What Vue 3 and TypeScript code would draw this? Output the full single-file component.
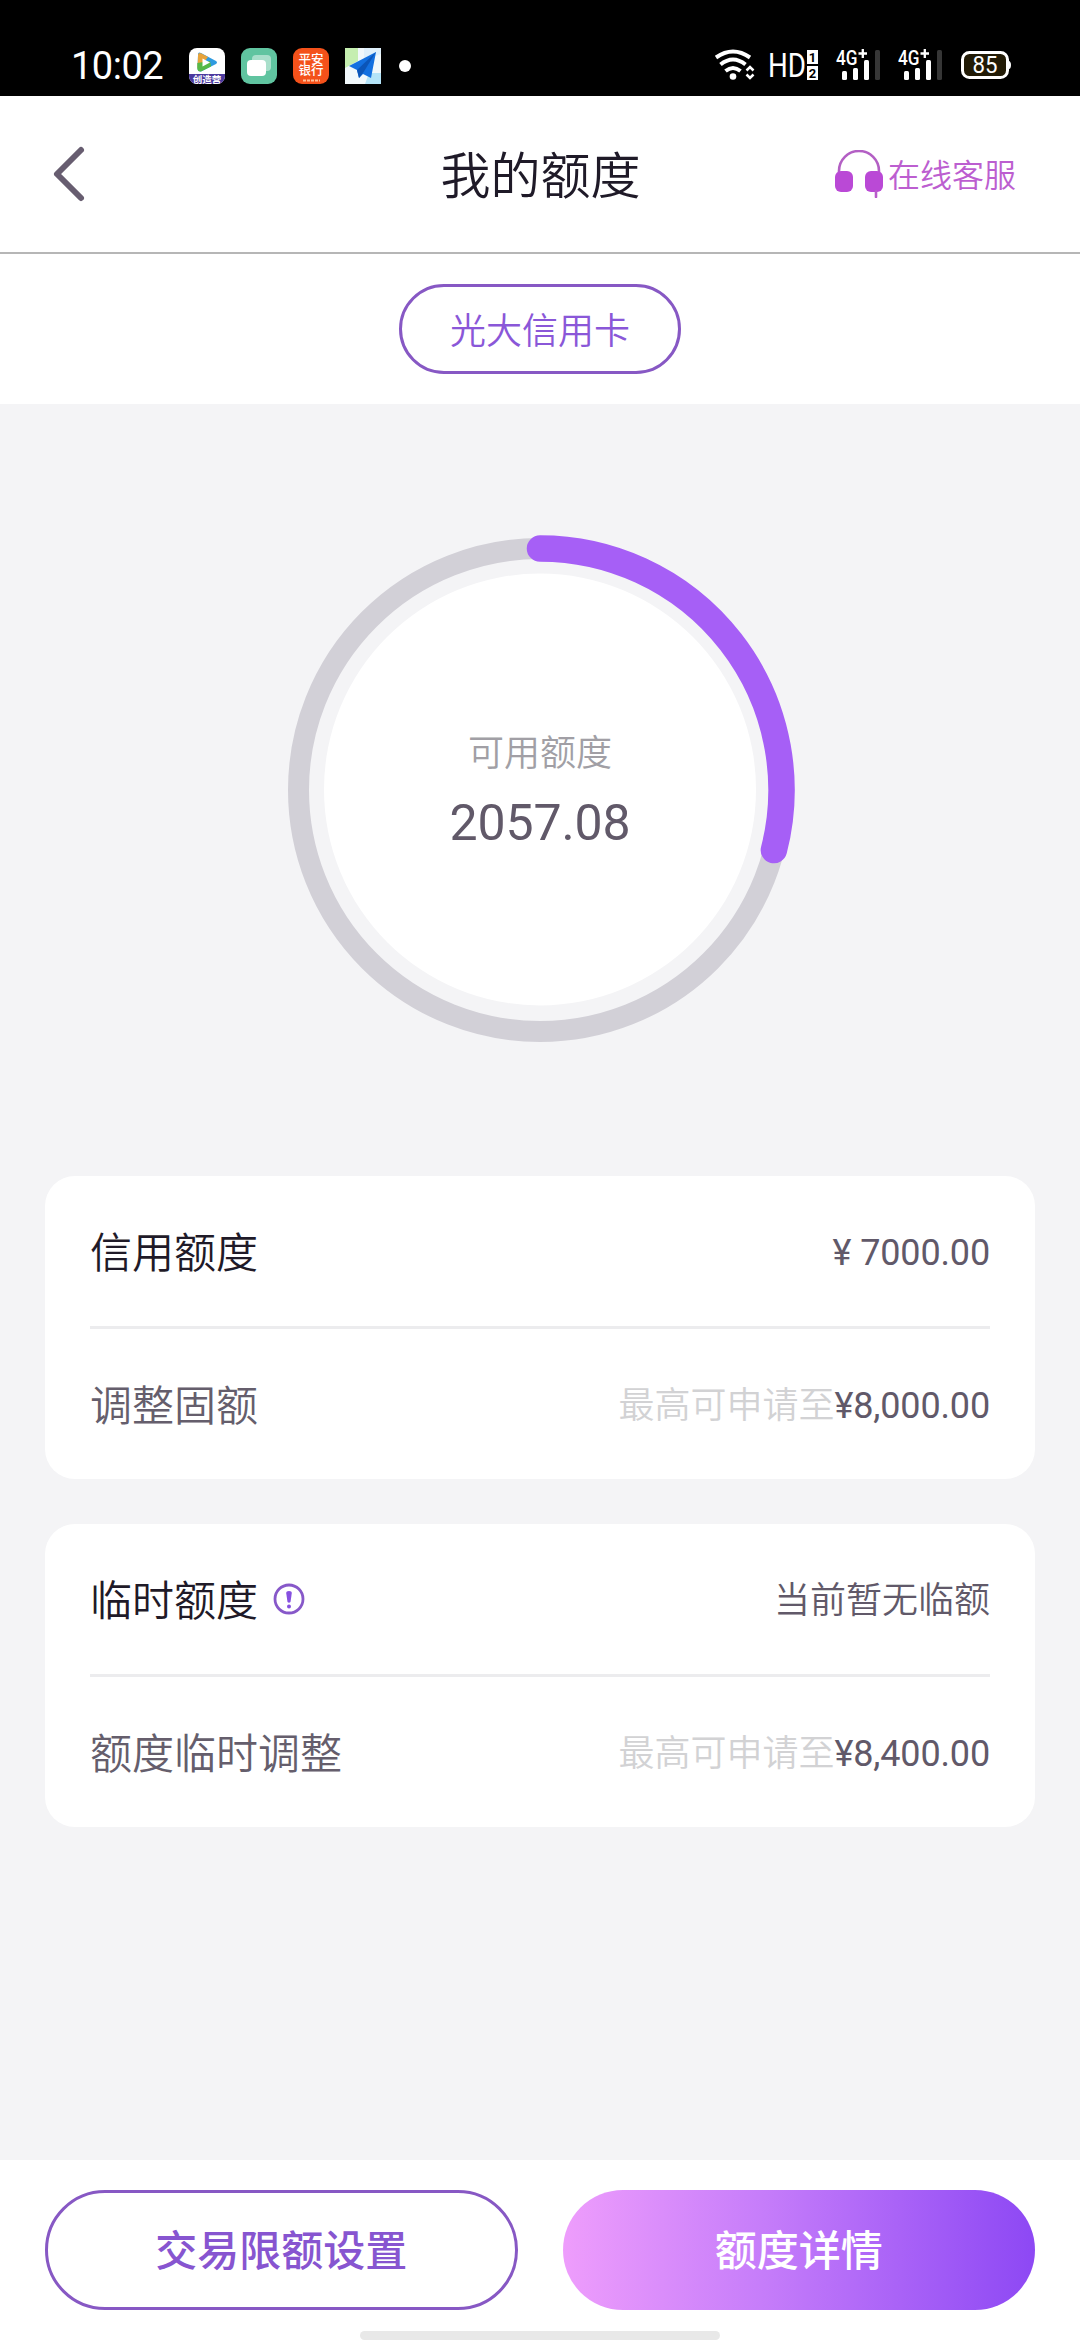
<script setup lang="ts">
interface Row {
  label: string
  strong?: boolean
  info?: boolean
  hint?: string
  amount?: boolean
  value: string
}

const cards: Row[][] = [
  [
    { label: '信用额度', strong: true, amount: true, value: '¥ 7000.00' },
    { label: '调整固额', hint: '最高可申请至', amount: true, value: '¥8,000.00' },
  ],
  [
    { label: '临时额度', strong: true, info: true, value: '当前暂无临额' },
    { label: '额度临时调整', hint: '最高可申请至', amount: true, value: '¥8,400.00' },
  ],
]

const radius = 241.5
const sweep = (104.4 * Math.PI) / 180
const endX = 260 + radius * Math.sin(sweep)
const endY = 260 - radius * Math.cos(sweep)
const arc = `M260 ${260 - radius}A${radius} ${radius} 0 0 1 ${endX} ${endY}`
</script>

<template>
  <div class="screen">
    <div class="status">
      <span class="clock">10:02</span>
      <div class="apps">
        <svg width="36" height="36" viewBox="0 0 36 36">
          <defs>
            <clipPath id="rounded"><rect width="36" height="36" rx="8" /></clipPath>
          </defs>
          <g clip-path="url(#rounded)">
            <rect width="36" height="36" fill="#fff" />
            <path d="M9 6.500Q9 3.500 12 5L27 13Q29 14.500 27 16L12 23.500Q9 24 8.500 21Z" fill="#2f9be0" />
            <path d="M9 8Q9 4 12.500 5.500L19 9L12 18L8.500 20Z" fill="#e8a33a" />
            <path d="M8.300 15L21 13L22 18.500L12 23.500Q8.500 24 8.300 20Z" fill="#57b947" />
            <path d="M13.500 10.500L21 14.500L13.500 18.500Z" fill="#fff" />
            <rect y="26" width="36" height="10" fill="#4c3a9e" />
            <text x="18" y="34.500" text-anchor="middle" class="tiny" font-size="9.500">创造营</text>
          </g>
        </svg>
        <svg width="36" height="36" viewBox="0 0 36 36">
          <rect width="36" height="36" rx="9" fill="#60c4a0" />
          <rect x="11" y="7" width="19" height="16" rx="4" fill="#a9dfcb" />
          <rect x="6" y="12" width="19" height="16" rx="4" fill="#fff" />
        </svg>
        <svg width="36" height="36" viewBox="0 0 36 36">
          <rect width="36" height="36" rx="9" fill="#f4511a" />
          <text x="18" y="15.500" text-anchor="middle" class="tiny bank" font-size="12.500">平安</text>
          <text x="18" y="26.500" text-anchor="middle" class="tiny bank" font-size="12.500">银行</text>
          <path d="M10 32.500h17" stroke="#ffc09a" stroke-width="2" stroke-dasharray="3 1" />
        </svg>
        <svg width="36" height="36" viewBox="0 0 36 36">
          <rect width="36" height="36" fill="#f1f8fb" />
          <path d="M0 0h13v13L0 20Z" fill="#c5eeb0" />
          <path d="M19 0h17v6L19 12Z" fill="#dff0fb" />
          <path d="M24 25h12v11H20Z" fill="#b4e4f8" />
          <path d="M31 4L4 18L12 22L14 30L18 26L26 30Z" fill="#1370e0" />
          <path d="M31 4L12 22L14 30L18 25Z" fill="#0b55b8" />
        </svg>
      </div>
      <i class="dot"></i>
      <svg class="signals" width="300" height="34" viewBox="714 50 300 34">
        <g fill="none" stroke="#fff" stroke-width="4">
          <path d="M716 58.500Q733 46.500 750 58.500" />
          <path d="M720.500 65.500Q733 55.500 745.500 65.500" />
          <path d="M725.500 72Q733 66 740.500 72" />
        </g>
        <circle cx="733" cy="77.500" r="3.300" fill="#fff" />
        <path d="M746.500 71.500L750 68L753.500 71.500M746.500 75.500L750 79L753.500 75.500" fill="none" stroke="#fff" stroke-width="2.500" />
        <text x="768" y="78" font-size="33" textLength="38" lengthAdjust="spacingAndGlyphs" class="sys">HD</text>
        <rect x="807" y="51" width="11" height="14" fill="#fff" />
        <rect x="807" y="67" width="11" height="14" fill="#fff" />
        <text x="812.500" y="62.500" text-anchor="middle" font-size="13" class="inv">1</text>
        <text x="812.500" y="78.500" text-anchor="middle" font-size="13" class="inv">2</text>
        <g v-for="dx in [0, 62]" :key="dx" :transform="`translate(${dx} 0)`">
          <text x="836" y="66" font-size="19.500" textLength="21.500" lengthAdjust="spacingAndGlyphs" class="sys net">4G</text>
          <path d="M858.500 54.500h8.500M862.800 50v9" stroke="#fff" stroke-width="2.300" />
          <rect x="842" y="72" width="5" height="9" rx="1.500" fill="#fff" />
          <rect x="853" y="69" width="5" height="12" rx="1.500" fill="#fff" />
          <rect x="864" y="61" width="5" height="20" rx="1.500" fill="#fff" />
          <rect x="875" y="51" width="5" height="30" rx="1.500" fill="#363636" />
        </g>
        <rect x="962.500" y="53.500" width="45" height="25" rx="7" fill="#221b06" stroke="#fff" stroke-width="3" />
        <path d="M1008 61.500Q1011 62 1011 66T1008 70.500Z" fill="#fff" />
        <text x="972.500" y="74" font-size="23" textLength="25" lengthAdjust="spacingAndGlyphs" class="sys">85</text>
      </svg>
    </div>

    <header class="header">
      <svg class="back" width="36" height="60" viewBox="0 0 36 60">
        <path d="M30 6L6 30L30 54" fill="none" stroke="#675d70" stroke-width="6" stroke-linecap="round" stroke-linejoin="round" />
      </svg>
      <h1>我的额度</h1>
      <div class="service">
        <svg width="48" height="48" viewBox="0 0 48 48">
          <path d="M4 24V21A20 20 0 0 1 44 21V24" fill="none" stroke="#b35fc4" stroke-width="2.600" />
          <rect x="0" y="21" width="18" height="21" rx="6" fill="#ba49d6" />
          <rect x="30" y="21" width="18" height="21" rx="6" fill="#ba49d6" />
          <path d="M41 41v6" stroke="#b95bcb" stroke-width="2.600" stroke-linecap="round" />
        </svg>
        <span>在线客服</span>
      </div>
    </header>

    <nav class="tabs"><span class="tab">光大信用卡</span></nav>

    <main class="content">
      <div class="gauge">
        <svg class="ring" width="520" height="520" viewBox="0 0 520 520">
          <circle cx="260" cy="260" :r="radius" fill="none" stroke="#d2d0d7" stroke-width="21" />
          <circle cx="260" cy="259.500" r="216" fill="#fff" />
          <path :d="arc" fill="none" stroke="#a65ff6" stroke-width="26.500" stroke-linecap="round" />
        </svg>
        <div class="amount">
          <span class="caption">可用额度</span>
          <strong>2057.08</strong>
        </div>
      </div>

      <section v-for="(card, i) in cards" :key="i" class="card">
        <div v-for="row in card" :key="row.label" class="row">
          <span class="label" :class="{ strong: row.strong }">{{ row.label }}</span>
          <svg v-if="row.info" class="info" width="32" height="32" viewBox="0 0 32 32">
            <circle cx="16" cy="16" r="14" fill="none" stroke="#8758c9" stroke-width="2.800" />
            <path d="M13.200 10Q13.200 8 16 8T18.800 10L17.500 19Q16 20.500 14.500 19Z" fill="#8650e0" />
            <circle cx="16" cy="23.600" r="2" fill="#8650e0" />
          </svg>
          <span class="value" :class="{ money: row.amount }"><span v-if="row.hint" class="hint">{{ row.hint }}</span>{{ row.value }}</span>
        </div>
      </section>
    </main>

    <footer class="footer">
      <div class="buttons">
        <button class="btn outline">交易限额设置</button>
        <button class="btn solid">额度详情</button>
      </div>
      <i class="home"></i>
    </footer>
  </div>
</template>

<style>
body {
  margin: 0;
}
</style>

<style scoped>
.screen {
  display: flex;
  flex-direction: column;
  width: 1080px;
  height: 2340px;
  overflow: hidden;
  background: #f4f4f6;
  font-family: Roboto, "Noto Sans CJK SC", sans-serif;
}
.status {
  display: flex;
  align-items: center;
  box-sizing: border-box;
  height: 96px;
  padding: 36px 66px 0 71px;
  background: #000;
}
.clock {
  width: 118px;
  color: #fff;
  font-size: 38px;
  line-height: 60px;
  letter-spacing: -0.5px;
}
.apps {
  display: flex;
  gap: 16px;
}
.dot {
  width: 12px;
  height: 12px;
  margin-left: 18px;
  border-radius: 50%;
  background: #fff;
}
.signals {
  margin-left: auto;
  overflow: visible;
}
.sys {
  fill: #fff;
}
.net {
  font-weight: 500;
}
.inv {
  fill: #000;
  font-weight: 700;
}
.tiny {
  fill: #fff;
  font-weight: 700;
}
.tiny.bank {
  font-weight: 500;
}
.header {
  display: grid;
  grid-template-columns: 1fr auto 1fr;
  align-items: center;
  box-sizing: border-box;
  height: 158px;
  padding: 0 64px 0 51px;
  border-bottom: 2px solid #b6b6b6;
  background: #fff;
}
.back {
  display: block;
}
h1 {
  margin: 6px 0 0 14px;
  color: #1f1a28;
  font-size: 50px;
  font-weight: 350;
  line-height: 60px;
}
.service {
  display: flex;
  align-items: center;
  justify-content: flex-end;
  gap: 5px;
  color: #bc5ed0;
  font-size: 32px;
  font-weight: 350;
  line-height: 48px;
}
.service span {
  padding-top: 3px;
}
.tabs {
  display: flex;
  align-items: center;
  justify-content: center;
  height: 150px;
  background: #fff;
}
.tab {
  box-sizing: border-box;
  height: 90px;
  padding: 2px 48px 0;
  border: 3px solid #8758c4;
  border-radius: 45px;
  color: #8a57d8;
  font-size: 36px;
  font-weight: 350;
  line-height: 86px;
}
.content {
  display: flex;
  flex: 1;
  flex-direction: column;
  gap: 45px;
  padding: 126px 45px 0;
}
.gauge {
  display: grid;
  justify-items: center;
  margin-bottom: 81px;
}
.ring,
.amount {
  grid-area: 1 / 1;
}
.amount {
  display: flex;
  flex-direction: column;
  align-items: center;
  padding-top: 200px;
}
.caption {
  color: #a19fa5;
  font-size: 36px;
  font-weight: 350;
  line-height: 48px;
}
.amount strong {
  margin-top: 15px;
  color: #615969;
  font-size: 50px;
  font-weight: 400;
  line-height: 60px;
  letter-spacing: -0.1px;
}
.card {
  padding: 0 45px;
  border-radius: 30px;
  background: #fff;
}
.row {
  display: flex;
  align-items: center;
  height: 150px;
}
.row + .row {
  border-top: 3px solid #ececee;
}
.label {
  padding-top: 5px;
  color: #655e6c;
  font-size: 42px;
  font-weight: 350;
  line-height: 60px;
}
.label.strong {
  color: #1f1a28;
}
.info {
  margin-left: 15px;
}
.value {
  margin-left: auto;
  padding-top: 4px;
  color: #615969;
  font-size: 36px;
  font-weight: 350;
  line-height: 54px;
}
.money {
  font-weight: 400;
  letter-spacing: -0.15px;
}
.hint {
  color: #d2d2d4;
  font-weight: 350;
  letter-spacing: 0;
}
.footer {
  display: flex;
  flex-direction: column;
  align-items: center;
  justify-content: space-between;
  box-sizing: border-box;
  height: 180px;
  padding-top: 30px;
  background: #fff;
}
.buttons {
  display: flex;
  gap: 45px;
  width: 990px;
}
.btn {
  width: 472.5px;
  box-sizing: border-box;
  height: 120px;
  padding: 4px 0 0;
  border: 0;
  border-radius: 60px;
  font-family: inherit;
  font-size: 42px;
  font-weight: 500;
  line-height: 60px;
}
.outline {
  border: 3px solid #8758c4;
  background: #fff;
  color: #8755d0;
}
.solid {
  background: linear-gradient(90deg, #ee9dfc 0%, #c67dfa 42%, #8d48f4 100%);
  color: #fff;
}
.home {
  width: 360px;
  height: 9px;
  border-radius: 5px;
  background: #e8e8e8;
}
</style>
